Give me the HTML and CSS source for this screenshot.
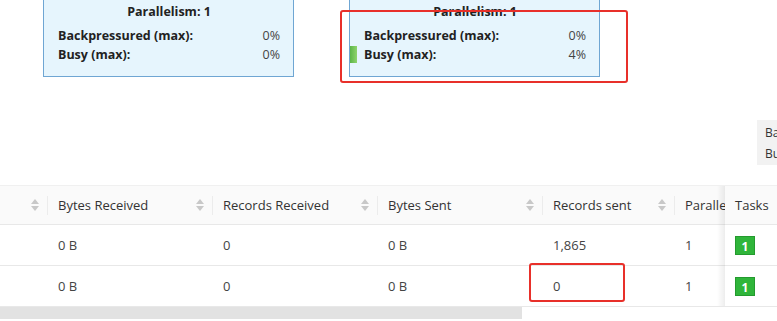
FILE: index.html
```html
<!DOCTYPE html>
<html lang="en">
<head>
    <meta charset="UTF-8">
    <meta name="viewport" content="width=device-width, initial-scale=1.0">
    <title>Job Graph</title>
    <link rel="stylesheet" href="styles.css">
</head>
<body>

    <!-- 그래프 영역 -->
    <div class="graph">
        <div class="node node-a">
            <div class="node-title">Parallelism: 1</div>
            <div class="node-row"><span>Backpressured (max):</span><span class="val">0%</span></div>
            <div class="node-row"><span>Busy (max):</span><span class="val">0%</span></div>
        </div>

        <div class="node node-b">
            <div class="node-title">Parallelism: 1</div>
            <div class="node-row"><span>Backpressured (max):</span><span class="val">0%</span></div>
            <div class="node-row busy"><span>Busy (max):</span><span class="val">4%</span></div>
        </div>

        <div class="legend">
            <div>Backpressured</div>
            <div>Busy</div>
        </div>

        <div class="mark mark-node"></div>
    </div>

    <!-- 테이블 영역 -->
    <div class="table-wrap">
        <div class="table-scroll">
            <table class="vertex-table">
                <colgroup>
                    <col style="width: 48px">
                    <col style="width: 165px">
                    <col style="width: 165px">
                    <col style="width: 165px">
                    <col style="width: 132px">
                    <col style="width: 102px">
                </colgroup>
                <thead>
                    <tr>
                        <th><span class="sorter"></span></th>
                        <th>Bytes Received<span class="sorter"></span></th>
                        <th>Records Received<span class="sorter"></span></th>
                        <th>Bytes Sent<span class="sorter"></span></th>
                        <th>Records sent<span class="sorter"></span></th>
                        <th class="no-div">Parallelism</th>
                    </tr>
                </thead>
                <tbody>
                    <tr>
                        <td></td>
                        <td>0 B</td>
                        <td>0</td>
                        <td>0 B</td>
                        <td>1,865</td>
                        <td>1</td>
                    </tr>
                    <tr>
                        <td></td>
                        <td>0 B</td>
                        <td>0</td>
                        <td>0 B</td>
                        <td class="marked">0<span class="mark mark-cell"></span></td>
                        <td>1</td>
                    </tr>
                </tbody>
            </table>
            <div class="scrollbar"><div class="thumb"></div></div>
        </div>

        <div class="tasks-col">
            <div class="tasks-head">Tasks</div>
            <div class="tasks-cell"><span class="badge">1</span></div>
            <div class="tasks-cell"><span class="badge">1</span></div>
        </div>
    </div>

</body>
</html>
```

FILE: styles.css
```css
/* 기본 스타일링 */
body {
    font-family: "Open Sans", "Noto Sans", sans-serif;
    margin: 0;
    padding: 0;
    background-color: #fff;
    color: #333;
    width: 777px;
    height: 321px;
    overflow: hidden;
}

/* 그래프 영역 */
.graph {
    position: relative;
    height: 185px;
    overflow: hidden;
}

.node {
    position: absolute;
    top: -1px;
    width: 249px;
    height: 78px;
    box-sizing: border-box;
    border: 1px solid #6fa6d3;
    background-color: #e6f5fd;
    padding: 2px 13px 0 14px;
    font-size: 12.5px;
    font-weight: bold;
    color: #222;
}

.node-a {
    left: 43px;
    width: 251px;
}

.node-b {
    left: 349px;
    width: 251px;
}

.node-title {
    text-align: center;
    line-height: 19px;
    margin-bottom: 5px;
}

.node-row {
    position: relative;
    display: flex;
    justify-content: space-between;
    line-height: 19px;
}

.node-row .val {
    font-weight: normal;
    color: #444;
}

.node-row.busy::before {
    content: "";
    position: absolute;
    left: -14px;
    top: 1px;
    width: 7px;
    height: 17px;
    background: linear-gradient(to right, #5cb548, #8fd46c);
}

.legend {
    position: absolute;
    left: 757px;
    top: 120px;
    width: 60px;
    height: 45px;
    box-sizing: border-box;
    padding: 2px 8px;
    background-color: #f2f2f2;
    font-size: 12px;
    line-height: 21px;
    overflow: hidden;
    white-space: nowrap;
}

/* 빨간 표시 박스 */
.mark {
    position: absolute;
    border: 2px solid #e8302a;
    border-radius: 3px;
    box-sizing: border-box;
    pointer-events: none;
}

.mark-node {
    left: 340px;
    top: 10px;
    width: 288px;
    height: 73px;
}

/* 테이블 영역 */
.table-wrap {
    position: relative;
    display: flex;
    border-top: 1px solid #f0f0f0;
}

.table-scroll {
    width: 725px;
    overflow: hidden;
}

.vertex-table {
    border-collapse: collapse;
    table-layout: fixed;
    width: 777px;
    font-size: 13px;
}

.vertex-table th,
.vertex-table td {
    text-align: left;
    padding: 0 10px;
    white-space: nowrap;
    overflow: hidden;
    border-bottom: 1px solid #e8e8e8;
}

.vertex-table th {
    position: relative;
    height: 38px;
    background-color: #fafafa;
    font-weight: normal;
    color: #333;
}

.vertex-table th::after {
    content: "";
    position: absolute;
    right: 0;
    top: 10px;
    width: 1px;
    height: 19px;
    background-color: #ececec;
}

.vertex-table th.no-div::after {
    display: none;
}

.vertex-table td {
    height: 40px;
    color: #444;
}

.vertex-table td.marked {
    position: relative;
    overflow: visible;
}

.mark-cell {
    left: -14px;
    top: -3px;
    width: 96px;
    height: 39px;
}

.sorter {
    position: absolute;
    right: 9px;
    top: 12px;
    width: 8px;
    height: 14px;
}

.sorter::before,
.sorter::after {
    content: "";
    position: absolute;
    left: 0;
    border-left: 4px solid transparent;
    border-right: 4px solid transparent;
}

.sorter::before {
    top: 1px;
    border-bottom: 5px solid #c8c8c8;
}

.sorter::after {
    top: 8px;
    border-top: 5px solid #c8c8c8;
}

.scrollbar {
    height: 12px;
}

.thumb {
    width: 522px;
    height: 12px;
    background-color: #e2e2e2;
}

/* 고정 Tasks 컬럼 */
.tasks-col {
    position: relative;
    width: 52px;
    background-color: #fff;
    font-size: 13px;
}

.tasks-col::before {
    content: "";
    position: absolute;
    left: -8px;
    top: 0;
    width: 8px;
    height: 120px;
    background: linear-gradient(to left, rgba(0, 0, 0, 0.07), rgba(0, 0, 0, 0));
}

.tasks-head {
    height: 38px;
    line-height: 38px;
    padding-left: 10px;
    background-color: #fafafa;
    border-bottom: 1px solid #e8e8e8;
}

.tasks-cell {
    height: 40px;
    padding-left: 10px;
    display: flex;
    align-items: center;
    border-bottom: 1px solid #e8e8e8;
}

.badge {
    display: inline-block;
    width: 20px;
    height: 19px;
    line-height: 19px;
    text-align: center;
    background-color: #2fb53a;
    border: 1px solid #249a2e;
    box-sizing: border-box;
    color: #fff;
    font-size: 12px;
    font-weight: bold;
}
```
